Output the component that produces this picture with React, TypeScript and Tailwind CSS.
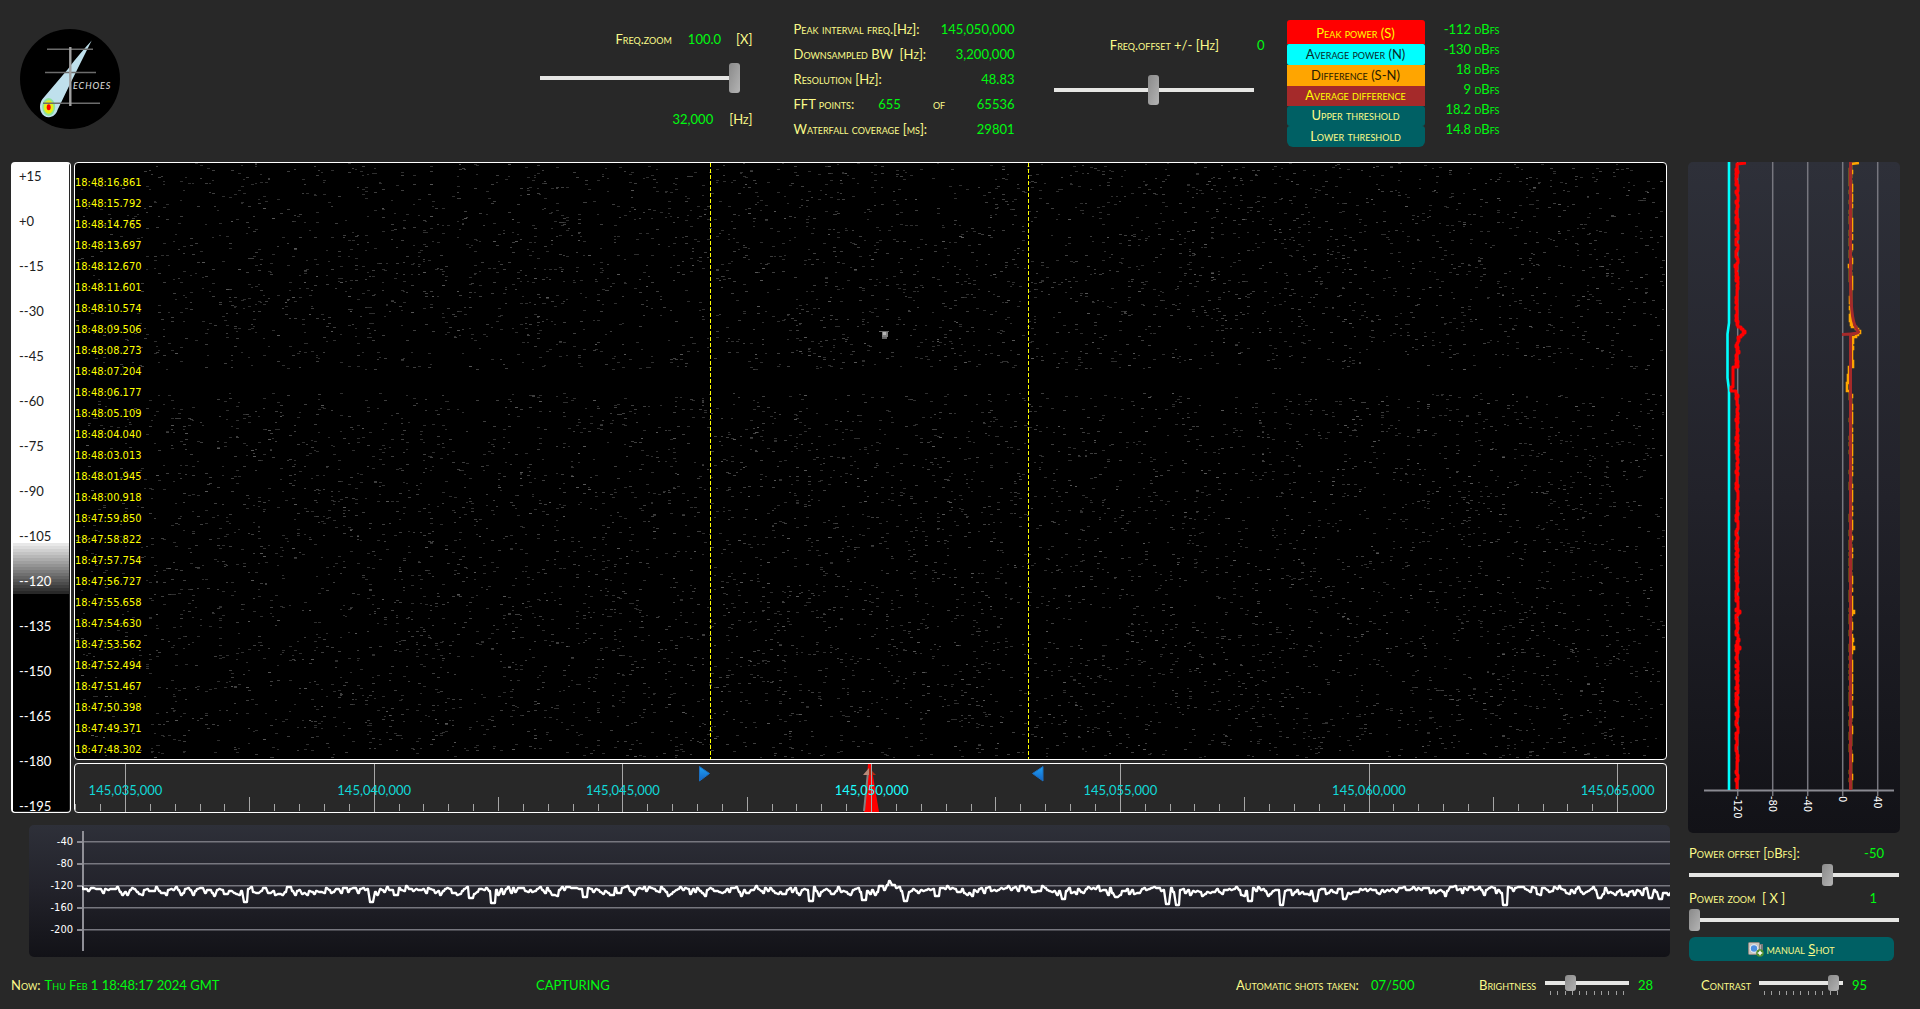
import React from "react";

function createRandom(seed: number) {
  let s = seed;
  return () => {
    s = (s * 1664525 + 1013904223) % 4294967296;
    return s / 4294967296;
  };
}

const axisFont = "font-['DejaVu_Sans_Condensed','DejaVu_Sans',sans-serif] text-[11px] leading-4";

/* ---------- waterfall noise ---------- */
const WF_W = 1591;
const WF_H = 596;

function buildNoise() {
  const rnd = createRandom(4242);
  const shades = ["", "", ""];
  for (let i = 0; i < 9500; i++) {
    const x = 1 + Math.round(Math.floor(rnd() * 655) * 2.425);
    const y = Math.floor(rnd() * (WF_H - 1));
    const keep = rnd();
    const tone = rnd();
    const w = rnd() < 0.4 ? 2 : 3;
    if (y > 206 && y < 230) continue;
    if (x < 70 && keep < 0.4) continue;
    const k = tone < 0.6 ? 0 : tone < 0.95 ? 1 : 2;
    shades[k] += `M${x} ${y}h${w}v1h-${w}z`;
  }
  return shades;
}
const noise = buildNoise();

const times = [
  "18:48:16.861", "18:48:15.792", "18:48:14.765", "18:48:13.697", "18:48:12.670", "18:48:11.601",
  "18:48:10.574", "18:48:09.506", "18:48:08.273", "18:48:07.204", "18:48:06.177", "18:48:05.109",
  "18:48:04.040", "18:48:03.013", "18:48:01.945", "18:48:00.918", "18:47:59.850", "18:47:58.822",
  "18:47:57.754", "18:47:56.727", "18:47:55.658", "18:47:54.630", "18:47:53.562", "18:47:52.494",
  "18:47:51.467", "18:47:50.398", "18:47:49.371", "18:47:48.302",
];

const dbScale = ["+15", "+0", "--15", "--30", "--45", "--60", "--75", "--90", "--105", "--120", "--135", "--150", "--165", "--180", "--195"];

const greySteps = Array.from({ length: 17 }, (_, i) => {
  const v = Math.round(232 - i * 12);
  const a = 58.6 + (i * 7.9) / 17;
  const b = 58.6 + ((i + 1) * 7.9) / 17;
  return `rgb(${v},${v},${v}) ${a.toFixed(2)}% ${b.toFixed(2)}%`;
}).join(",");
const scaleBackground = `linear-gradient(to bottom, #fff 58.6%, ${greySteps}, #000 66.5%)`;

/* ---------- spectrum trace ---------- */
function buildSpectrum() {
  const rnd = createRandom(77);
  const dips: Record<number, number> = {
    245: 77, 372: 77, 396: 70, 471: 73, 493: 78, 585: 72, 811: 76, 865: 75, 906: 76, 938: 71, 1064: 74,
    1117: 72, 1168: 79, 1178: 80, 1251: 76, 1283: 80, 1316: 76, 1346: 74, 1506: 80, 1601: 73, 1652: 73, 1661: 74,
  };
  let d = "";
  let level = 64;
  for (let i = 0; i <= 655; i++) {
    const x = Math.round(i * 2.427);
    const abs = x + 82;
    level += (rnd() - 0.5) * 11;
    if (level < 61) level = 62 + rnd() * 3;
    if (level > 71) level = 67 - rnd() * 4;
    let y = Math.round(level);
    for (const key of Object.keys(dips)) {
      if (Math.abs(Number(key) - abs) <= 2) y = dips[Number(key)];
    }
    if (abs >= 886 && abs < 890) y = 60;
    if (abs >= 890 && abs < 893) y = 56;
    if (abs >= 893 && abs < 897) y = 60;
    d += i === 0 ? `M0 ${y}` : `L${x - 1} ${y}H${x}`;
  }
  return d;
}
const spectrum = buildSpectrum();

/* ---------- power history traces ---------- */
function buildPower() {
  const rnd = createRandom(911);
  let red = "M58 1L49 2";
  let orange = "M171 1L163 2";
  for (let y = 3; y < 628; y += 2) {
    const n = Math.round((rnd() - 0.5) * 2.6);
    const spike = rnd() < 0.07 ? Math.round((rnd() - 0.5) * 5) : 0;
    let r = 49 + n + spike;
    let o = 163 + n + spike;
    if (y > 166 && y < 176) {
      r = 49 + (y < 171 ? y - 166 : 176 - y) + 3;
      o = 164 + (y < 171 ? y - 166 : 176 - y) + 3;
    }
    if (y >= 176 && y <= 206) o = 164 + n;
    if (y > 206 && y < 231) {
      r = 45 - (y > 226 ? 2 : 0);
      o = 161 - Math.floor((y - 206) / 8);
    }
    red += `H${r}V${y}`;
    orange += `H${o}V${y}`;
  }
  return { red, orange };
}
const power = buildPower();

const label = "text-[#fbfb8a]";
const value = "text-[#00fa10]";

type SliderProps = { id: string; value: number; size: string };
function Slider({ id, value, size }: SliderProps) {
  return (
    <input
      id={id}
      type="range"
      min={0}
      max={100}
      defaultValue={value}
      className={
        "block min-w-0 cursor-pointer appearance-none bg-transparent " +
        "[&::-webkit-slider-runnable-track]:h-1 [&::-webkit-slider-runnable-track]:bg-[#e6e6e4] " +
        "[&::-webkit-slider-thumb]:w-[11px] [&::-webkit-slider-thumb]:appearance-none [&::-webkit-slider-thumb]:rounded-[3px] " +
        "[&::-webkit-slider-thumb]:bg-linear-to-br [&::-webkit-slider-thumb]:from-[#8a8a8a] [&::-webkit-slider-thumb]:to-[#b4b4b4] " +
        size
      }
    />
  );
}
const tall = "h-[30px] [&::-webkit-slider-thumb]:h-[30px] [&::-webkit-slider-thumb]:-mt-[13px]";
const medium = "h-[22px] [&::-webkit-slider-thumb]:h-[22px] [&::-webkit-slider-thumb]:-mt-[9px]";
const small = "h-4 [&::-webkit-slider-thumb]:h-4 [&::-webkit-slider-thumb]:-mt-[6px]";

function Logo() {
  return (
    <svg width="100" height="100" viewBox="0 0 100 100" role="img" aria-label="Echoes" className="shrink-0">
      <circle cx="50" cy="50" r="50" fill="#000" />
      <path d="M71.7 11.5C65 19 56 29 48 40L22.5 70C19 75 20 80 21 83C23 87 26 88.500 29 88.300C33 88 36.500 85 37.500 81L51 53L57 41Z" fill="#bfe0ec" />
      <ellipse cx="28.700" cy="78" rx="6.500" ry="9" fill="#8fe39a" />
      <ellipse cx="28.700" cy="78" rx="4.800" ry="6.700" fill="#e6ee16" />
      <ellipse cx="28.700" cy="78.300" rx="2" ry="3" fill="#f00" />
      <g stroke="#6c6c6c" strokeWidth="1.600">
        <path d="M27 20.300H73M25 43.500H76M23 74.300H80" />
        <path d="M50.300 18V77" stroke="#a0a0a0" strokeWidth="2.400" />
      </g>
      <text x="53" y="60" fill="#e0e0e0" className="font-['Lato',sans-serif] text-[9px] tracking-widest italic">ECHOES</text>
    </svg>
  );
}

const info: [string, React.ReactNode, string][] = [
  ["Peak interval freq.[Hz]:", null, "145,050,000"],
  ["Downsampled BW  [Hz]:", null, "3,200,000"],
  ["Resolution [Hz]:", null, "48.83"],
  ["FFT points:", <><span className={value + " ml-6"}>655</span><span className={label + " ml-8"}>of</span></>, "65536"],
  ["Waterfall coverage [ms]:", null, "29801"],
];

const legend = [
  { name: "Peak power (S)", style: "h-6 rounded-t-[3px] bg-[#ff0000] text-[#ffff00] pt-px", reading: "-112 dBfs" },
  { name: "Average power (N)", style: "h-[21px] rounded-[2px] bg-[#00ffff] text-[#0a2a2a] pb-[2px]", reading: "-130 dBfs" },
  { name: "Difference (S-N)", style: "h-[21px] bg-[#ffa500] text-[#2a1c00] pb-[2px]", reading: "18 dBfs" },
  { name: "Average difference", style: "h-5 bg-[#a52a2a] text-[#ffff00] pb-[2px]", reading: "9 dBfs" },
  { name: "Upper threshold", style: "h-5 rounded-[3px] bg-[#006064] text-[#fbfb8a] pb-[2px]", reading: "18.2 dBfs" },
  { name: "Lower threshold", style: "h-[21px] rounded-t-[3px] rounded-b-[6px] bg-[#006064] text-[#fbfb8a] pb-[2px]", reading: "14.8 dBfs" },
];

function Header() {
  return (
    <header className="flex items-start pb-[15px]">
      <div className="w-[119px] shrink-0 pt-[29px] pl-5"><Logo /></div>
      <div className="flex-1" />
      <section className="w-[213px] pt-[30px]">
        <div className="flex h-[18px] items-center justify-end">
          <label htmlFor="freq-zoom" className={label}>Freq.zoom</label>
          <output className={value + " ml-4"}>100.0</output>
          <span className={label + " ml-[15px]"}>[X]</span>
        </div>
        <div className="mt-[15px]"><Slider id="freq-zoom" value={100} size={"w-[200px] " + tall} /></div>
        <div className="mt-[17px] flex h-[18px] items-center justify-end">
          <output className={value}>32,000</output>
          <span className={label + " ml-4"}>[Hz]</span>
        </div>
      </section>
      <dl className="ml-[41px] w-[221px] pt-4">
        {info.map(([name, extra, val]) => (
          <div key={name} className="flex h-[25px] items-center whitespace-pre">
            <dt className={label}>{name}</dt>
            {extra && <dd>{extra}</dd>}
            <dd className={value + " ml-auto"}>{val}</dd>
          </div>
        ))}
      </dl>
      <section className="ml-[39px] w-[211px] pt-9">
        <div className="flex h-[18px] items-center justify-end">
          <label htmlFor="freq-offset" className={label}>Freq.offset +/- [Hz]</label>
          <output className={value + " ml-[38px]"}>0</output>
        </div>
        <div className="mt-[21px]"><Slider id="freq-offset" value={50} size={"w-[200px] " + tall} /></div>
      </section>
      <section className="ml-[22px] flex w-[138px] flex-col pt-5">
        {legend.map((l) => (
          <button key={l.name} type="button" className={"flex items-center justify-center leading-4 [font-variant-caps:small-caps] " + l.style}>
            {l.name}
          </button>
        ))}
      </section>
      <section className="w-[75px] pt-[19px] text-right">
        {legend.map((l) => (
          <output key={l.name} className={value + " block h-5 leading-5"}>{l.reading}</output>
        ))}
      </section>
      <div className="flex-1" />
    </header>
  );
}

function DbScale() {
  return (
    <div className="flex w-[60px] shrink-0 rounded-[4px] border border-l-2 border-white pr-px pb-px">
      <ol className="flex flex-1 flex-col justify-between pt-2 pl-[6px]" style={{ background: scaleBackground }}>
        {dbScale.map((t, i) => (
          <li key={t} className={"leading-[10px] " + (i < 9 ? "text-[#202020]" : "text-white")}>{t}</li>
        ))}
      </ol>
    </div>
  );
}

function Waterfall() {
  return (
    <div className="relative flex flex-1 flex-col overflow-hidden rounded-[4px] border border-white bg-black">
      <svg className="min-h-0 w-full flex-1" viewBox={`0 0 ${WF_W} ${WF_H}`} preserveAspectRatio="none" shapeRendering="crispEdges" aria-hidden="true">
        <path d={noise[0]} fill="#2f2f2f" />
        <path d={noise[1]} fill="#3e3e3e" />
        <path d={noise[2]} fill="#565656" />
        <path d="M804 168h10v1h-10zM807 174h5v2h-5z" fill="#666" />
        <path d="M807 169h6v5h-6z" fill="#808080" />
        <path d="M808 169h3v3h-3z" fill="#b4b4b4" />
        <path d="M635.500 0V596M953.500 0V596" stroke="#ffff00" strokeWidth="1" strokeDasharray="4 2" />
      </svg>
      <ol className={"absolute inset-0 flex flex-col justify-between pt-3 pb-px text-[#ffff00] [font-variant-caps:normal] " + axisFont}>
        {times.map((t) => <li key={t}>{t}</li>)}
      </ol>
    </div>
  );
}

const majors = ["145,035,000", "145,040,000", "145,045,000", "145,050,000", "145,055,000", "145,060,000", "145,065,000"];
const ticks = Array.from({ length: 63 }, (_, i) => {
  const x = Math.round(50 + (i - 2) * 24.87) + 0.5;
  const k = (i - 2 + 100) % 10;
  return k === 0 ? `M${x} 0V48` : k === 5 ? `M${x} 33V47` : `M${x} 40V47`;
}).join("");

function FrequencyRuler() {
  return (
    <div className="relative mt-[3px] flex h-[50px] overflow-hidden rounded-[4px] border border-white">
      <svg className="h-full w-full" viewBox="0 0 1591 48" preserveAspectRatio="none" aria-hidden="true">
        <defs>
          <linearGradient id="arrow" x1="0" y1="0" x2="0" y2="1">
            <stop offset="0" stopColor="#1fa2f4" />
            <stop offset="1" stopColor="#1463c4" />
          </linearGradient>
        </defs>
        <path d="M793 0H796L804 48H789Z" fill="#ff0000" />
        <path d="M793 8L789 47" stroke="#808080" strokeWidth="2" />
        <path d="M788 11L794 4V11Z" fill="#b88878" />
        <path d="M794 4L801 11H794Z" fill="#b02810" />
        <path d={ticks} stroke="#a6a6a6" strokeWidth="1" shapeRendering="crispEdges" />
        <path d="M624.500 2.500V17L634.500 9.500ZM968 2.500V17L957.500 9.500Z" fill="url(#arrow)" stroke="#1b6fc0" />
      </svg>
      {majors.map((m, i) => (
        <span
          key={m}
          className={"absolute top-[17px] -translate-x-1/2 leading-[18px] " + (i === 3 ? "text-[#1cffff]" : "text-[#12d8d8]")}
          style={{ left: `${((50.5 + i * 248.7) / 1591) * 100}%` }}
        >
          {m}
        </span>
      ))}
    </div>
  );
}

const panel = "rounded-[5px] bg-linear-to-b from-[#2e3039] via-[#22222a] to-[#121217]";

function SpectrumPlot() {
  return (
    <div className={"mt-3 ml-[18px] flex h-[132px] overflow-hidden " + panel}>
      <ol className={"flex w-11 flex-col pt-[9px] text-right text-white [font-variant-caps:normal] " + axisFont}>
        {[-40, -80, -120, -160, -200].map((t) => <li key={t} className="h-[22px]">{t}</li>)}
      </ol>
      <svg className="ml-1 h-full w-[5px] shrink-0" viewBox="0 0 5 132" aria-hidden="true">
        <path d="M0 17H5M0 39H5M0 61H5M0 83H5M0 105H5" stroke="#8a8a92" strokeWidth="2" />
      </svg>
      <svg className="h-full min-w-0 flex-1" viewBox="0 0 1588 132" preserveAspectRatio="none" role="img" aria-label="Power spectrum">
        <path d="M0 16.800H1588M0 38.800H1588M0 60.800H1588M0 82.800H1588M0 104.800H1588" stroke="#77777f" strokeWidth="1.500" />
        <path d="M1 6V126" stroke="#8f8f96" strokeWidth="2" />
        <path d={spectrum} fill="none" stroke="#fff" strokeWidth="2.300" strokeLinejoin="round" />
      </svg>
    </div>
  );
}

function PowerHistory() {
  return (
    <div className={"flex flex-1 flex-col overflow-hidden " + panel}>
      <svg className="min-h-0 w-full flex-1" viewBox="0 0 212 634" preserveAspectRatio="none" role="img" aria-label="Power history">
        <path d="M49.700 0V634M84.700 0V634M119.700 0V634M154.700 0V634M189.700 0V634" stroke="#77777f" strokeWidth="1.500" />
        <path d="M16 628.500H206" stroke="#8a8a92" strokeWidth="2" />
        <path d="M41 0V161L39.500 172V216L41 228V628" fill="none" stroke="#00ffff" strokeWidth="2.600" />
        <path d={power.red} fill="none" stroke="#ff0000" strokeWidth="3" strokeLinejoin="round" />
        <path d={power.orange} fill="none" stroke="#ffa500" strokeWidth="2.600" />
        <path d="M162.500 0V120C163 152 165 163 170 169C172 171 169 172 154 172.500M162.500 172V628" fill="none" stroke="#a52a2a" strokeWidth="3" />
      </svg>
      <div className={"relative h-[37px] text-white [font-variant-caps:normal] " + axisFont}>
        {["-120", "-80", "-40", "0", "40"].map((t, i) => (
          <span key={t} className="absolute top-0 -translate-x-1/2 [writing-mode:vertical-rl]" style={{ left: `${((49 + i * 35) / 212) * 100}%` }}>
            {t}
          </span>
        ))}
      </div>
    </div>
  );
}

function CameraIcon() {
  return (
    <svg width="16" height="16" viewBox="0 0 16 16" aria-hidden="true">
      <path d="M9 3H15V12H9Z" fill="#7a7a7a" />
      <path d="M10.500 4V11M12.500 4V11" stroke="#b4b4b4" />
      <rect x="0.500" y="1.500" width="11" height="12" rx="1" fill="#c9c4bd" stroke="#8b8680" />
      <circle cx="6" cy="7.500" r="4.200" fill="#e8eef6" />
      <circle cx="6" cy="7.500" r="3.200" fill="#4d8fe0" />
      <circle cx="12" cy="12" r="3.800" fill="#4f8f2c" />
      <path d="M12 9.700V14.300M9.700 12H14.300" stroke="#fff" strokeWidth="1.500" />
    </svg>
  );
}

function PowerControls() {
  return (
    <div className="px-px pt-[11px]">
      <div className="flex h-[18px] items-center justify-between pr-[15px]">
        <label htmlFor="power-offset" className={label}>Power offset [dBfs]:</label>
        <output className={value}>-50</output>
      </div>
      <div className="mt-[2px]"><Slider id="power-offset" value={67} size={"w-full " + medium} /></div>
      <div className="mt-[3px] flex h-[18px] items-center justify-between pr-[22px]">
        <label htmlFor="power-zoom" className={label + " whitespace-pre"}>Power zoom  [ X ]</label>
        <output className={value}>1</output>
      </div>
      <div className="mt-[2px]"><Slider id="power-zoom" value={0} size={"w-full " + medium} /></div>
      <div className="mt-[6px] pr-[5px]">
        <button type="button" className={"flex h-6 w-full items-center justify-center gap-[2px] rounded-[6px] bg-[#006064] [font-variant-caps:small-caps] " + label}>
          <CameraIcon />
          <span>manual <u>S</u>hot</span>
        </button>
      </div>
    </div>
  );
}

function TickSlider({ id, value }: { id: string; value: number }) {
  return (
    <div className="w-[84px]">
      <Slider id={id} value={value} size={"w-full " + small} />
      <div className="flex h-1 justify-between px-[5px]">
        {Array.from({ length: 11 }, (_, i) => <i key={i} className="w-px bg-[#a0a0a0]" />)}
      </div>
    </div>
  );
}

function StatusBar() {
  return (
    <footer className="flex h-12 items-center pl-[11px]">
      <p className="flex flex-1 items-center gap-1">
        <span className={label}>Now:</span>
        <span className={value}>Thu Feb 1 18:48:17 2024 GMT</span>
      </p>
      <p className={value + " w-[700px]"}>CAPTURING</p>
      <p className="flex w-[243px] gap-3">
        <span className={label}>Automatic shots taken:</span>
        <span className={value}>07/500</span>
      </p>
      <div className="flex w-[222px] items-center">
        <label htmlFor="brightness" className={label + " w-[66px]"}>Brightness</label>
        <TickSlider id="brightness" value={28} />
        <output className={value + " ml-[9px]"}>28</output>
      </div>
      <div className="flex w-[219px] items-center">
        <label htmlFor="contrast" className={label + " w-[58px]"}>Contrast</label>
        <TickSlider id="contrast" value={95} />
        <output className={value + " ml-[9px]"}>95</output>
      </div>
    </footer>
  );
}

export default function App() {
  return (
    <div className="flex min-h-screen flex-col bg-[#282828] font-['Lato',sans-serif] text-[13px] leading-[18px] [font-variant-caps:small-caps]">
      <Header />
      <main className="flex flex-1 gap-[18px] pr-5 pl-[11px]">
        <div className="flex min-w-0 flex-1 flex-col pb-1">
          <div className="flex flex-1 gap-[3px] pr-[3px]">
            <DbScale />
            <div className="flex min-w-0 flex-1 flex-col">
              <Waterfall />
              <FrequencyRuler />
            </div>
          </div>
          <SpectrumPlot />
        </div>
        <aside className="flex w-[212px] shrink-0 flex-col">
          <PowerHistory />
          <PowerControls />
        </aside>
      </main>
      <StatusBar />
    </div>
  );
}
